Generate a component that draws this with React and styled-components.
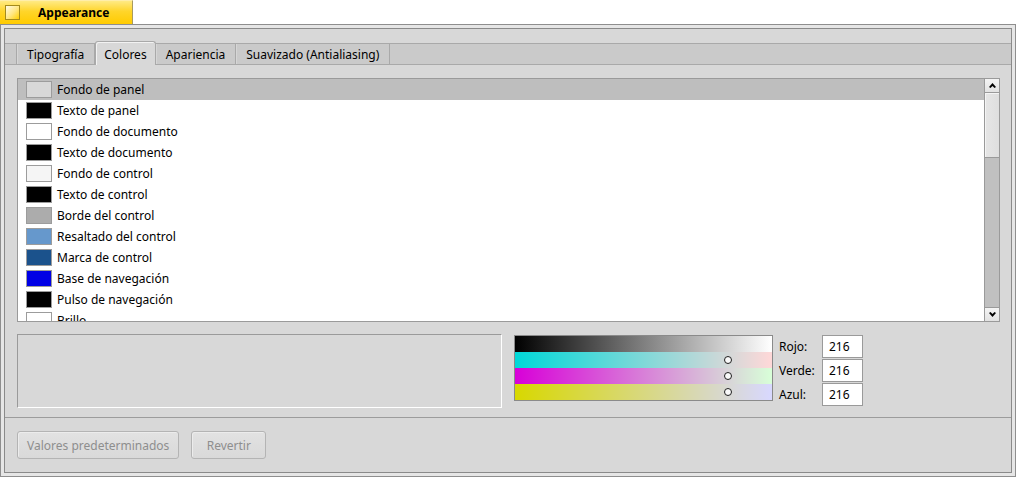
import React from "react";
import styled, { createGlobalStyle } from "styled-components";

const GlobalStyle = createGlobalStyle`
  html, body {
    margin: 0;
    padding: 0;
    background: #fff;
  }
  body {
    font-family: "Noto Sans", "DejaVu Sans", sans-serif;
    font-size: 12px;
    color: #000;
  }
  * {
    box-sizing: border-box;
  }
`;

const Page = styled.div`
  width: 1016px;
  height: 477px;
  display: flex;
  flex-direction: column;
  overflow: hidden;
`;

const TitleTab = styled.div`
  width: 133px;
  height: 24px;
  flex: none;
  display: flex;
  align-items: center;
  padding-left: 5px;
  background: linear-gradient(180deg, #ffea84 0%, #ffd52a 45%, #ffcb00 100%);
  border-right: 1px solid #a89a60;
  border-top: 1px solid #ffeeaa;

  .close {
    width: 15px;
    height: 15px;
    border: 1px solid #a38a1c;
    background: linear-gradient(135deg, #fffbe6 0%, #ffe680 55%, #ffd000 100%);
    margin-right: 18px;
  }

  .title {
    font-weight: bold;
    font-size: 12px;
    color: #000;
  }
`;

const WindowFrame = styled.div`
  flex: 1;
  display: flex;
  border: 1px solid #8e8e8e;
  background: #e6e6e6;
  padding: 3px;
`;

const WindowBody = styled.div`
  flex: 1;
  display: flex;
  flex-direction: column;
  border: 1px solid #8a8a8a;
  background: #d8d8d8;
`;

const TabView = styled.div`
  flex: 1;
  display: flex;
  flex-direction: column;
  padding-top: 14px;
`;

const TabStrip = styled.div`
  height: 22px;
  display: flex;
  align-items: stretch;
  background: #cacaca;
  border-top: 1px solid #a9a9a9;
  border-bottom: 1px solid #a9a9a9;
`;

const TabLead = styled.div`
  width: 12px;
  border-right: 1px solid #a9a9a9;
`;

const Tab = styled.div`
  display: flex;
  align-items: center;
  padding: 0 10px;
  border-right: 1px solid #a9a9a9;
  box-shadow: inset 1px 0 0 #d6d6d6;
  white-space: nowrap;

  &.active {
    margin-top: -3px;
    margin-bottom: -1px;
    padding: 1px 8px 0 8px;
    border: 1px solid #a9a9a9;
    border-bottom: none;
    border-radius: 3px 3px 0 0;
    background: #d8d8d8;
    box-shadow: inset 1px 1px 0 #f2f2f2;
  }
`;

const TabPanel = styled.div`
  flex: 1;
  display: flex;
  flex-direction: column;
  padding: 13px 11px 0 12px;
  border-bottom: 1px solid #9c9c9c;
`;

const ListBox = styled.div`
  height: 244px;
  display: flex;
  border: 1px solid #9a9a9a;
  background: #fff;
`;

const Rows = styled.div`
  flex: 1;
  overflow: hidden;
`;

const Row = styled.div`
  height: 21px;
  display: flex;
  align-items: center;
  gap: 5px;
  padding-left: 8px;
  background: ${(p) => (p.$selected ? "#bebebe" : "transparent")};
  white-space: nowrap;
`;

const Swatch = styled.span`
  width: 26px;
  height: 17px;
  flex: none;
  border: 1px solid #9c9c9c;
  background: ${(p) => p.$color};
`;

const ScrollBar = styled.div`
  width: 15px;
  display: flex;
  flex-direction: column;
  border-left: 1px solid #9a9a9a;
  background: #c0c0c0;
`;

const ScrollButton = styled.div`
  height: 14px;
  display: flex;
  align-items: center;
  justify-content: center;
  background: linear-gradient(180deg, #f4f4f4, #e2e2e2);
  border-top: ${(p) => (p.$down ? "1px solid #9a9a9a" : "none")};
  border-bottom: ${(p) => (p.$down ? "none" : "1px solid #9a9a9a")};
`;

const Thumb = styled.div`
  height: 65px;
  background: linear-gradient(90deg, #e6e6e6, #dedede);
  border-bottom: 1px solid #9a9a9a;
  box-shadow: inset 1px 1px 0 #f4f4f4;
`;

const Track = styled.div`
  flex: 1;
`;

const BottomRow = styled.div`
  display: flex;
  align-items: flex-start;
  margin-top: 12px;
`;

const Preview = styled.div`
  width: 485px;
  height: 74px;
  background: ${(p) => p.$color};
  border-top: 1px solid #9a9a9a;
  border-left: 1px solid #9a9a9a;
  border-bottom: 1px solid #fff;
  border-right: 1px solid #fff;
  margin-right: 12px;
`;

const ColorControl = styled.div`
  width: 259px;
  margin-top: 1px;
  display: flex;
  flex-direction: column;
  border: 1px solid #8a8a8a;
`;

const Ramp = styled.div`
  position: relative;
  height: 16px;
  background: linear-gradient(90deg, ${(p) => p.$from}, ${(p) => p.$to});
`;

const Marker = styled.span`
  position: absolute;
  top: 4px;
  width: 8px;
  height: 8px;
  border-radius: 50%;
  border: 1px solid #1e1e1e;
  background: #fafafa;
`;

const Fields = styled.div`
  margin: 1px 0 0 6px;
  display: grid;
  grid-template-columns: 43px 41px;
  row-gap: 1px;
  align-items: center;
`;

const FieldLabel = styled.span`
  white-space: nowrap;
`;

const Field = styled.div`
  height: 23px;
  display: flex;
  align-items: center;
  padding-left: 6px;
  background: #fff;
  border: 1px solid #9a9a9a;
`;

const ButtonBar = styled.div`
  height: 54px;
  display: flex;
  align-items: flex-start;
  gap: 12px;
  padding: 13px 12px 0;
`;

const Button = styled.button`
  height: 28px;
  min-width: 75px;
  padding: 0 9px;
  font-family: inherit;
  font-size: 12px;
  color: ${(p) => (p.disabled ? "#8e8e8e" : "#000")};
  background: linear-gradient(180deg, #e2e2e2, #d9d9d9);
  border: 1px solid #b4b4b4;
  border-radius: 3px;
  box-shadow: inset 1px 1px 0 #ececec;
`;

const Arrow = ({ down }) => (
  <svg width="7" height="5" viewBox="0 0 7 5">
    <polygon
      points="0,4 3.5,0 7,4 5.5,5 3.5,3 1.5,5"
      fill="#000"
      transform={down ? "rotate(180 3.5 2.5)" : undefined}
    />
  </svg>
);

const colors = [
  ["Fondo de panel", "#d8d8d8"],
  ["Texto de panel", "#000000"],
  ["Fondo de documento", "#ffffff"],
  ["Texto de documento", "#000000"],
  ["Fondo de control", "#f5f5f5"],
  ["Texto de control", "#000000"],
  ["Borde del control", "#acacac"],
  ["Resaltado del control", "#6698cc"],
  ["Marca de control", "#1b528c"],
  ["Base de navegación", "#0000e5"],
  ["Pulso de navegación", "#000000"],
  ["Brillo", "#ffffff"],
];

const rgb = { r: 216, g: 216, b: 216 };

const App = () => {
  const ramps = [
    { from: "#000", to: "#fff" },
    { from: "rgb(0,216,216)", to: "rgb(255,216,216)", value: rgb.r },
    { from: "rgb(216,0,216)", to: "rgb(216,255,216)", value: rgb.g },
    { from: "rgb(216,216,0)", to: "rgb(216,216,255)", value: rgb.b },
  ];

  return (
    <Page>
      <GlobalStyle />
      <TitleTab>
        <div className="close" />
        <span className="title">Appearance</span>
      </TitleTab>
      <WindowFrame>
        <WindowBody>
          <TabView>
            <TabStrip>
              <TabLead />
              <Tab>Tipografía</Tab>
              <Tab className="active">Colores</Tab>
              <Tab>Apariencia</Tab>
              <Tab>Suavizado (Antialiasing)</Tab>
            </TabStrip>
            <TabPanel>
              <ListBox>
                <Rows>
                  {colors.map(([name, color], i) => (
                    <Row key={name} $selected={i === 0}>
                      <Swatch $color={color} />
                      {name}
                    </Row>
                  ))}
                </Rows>
                <ScrollBar>
                  <ScrollButton>
                    <Arrow />
                  </ScrollButton>
                  <Thumb />
                  <Track />
                  <ScrollButton $down>
                    <Arrow down />
                  </ScrollButton>
                </ScrollBar>
              </ListBox>
              <BottomRow>
                <Preview $color="#d8d8d8" />
                <ColorControl>
                  {ramps.map((r, i) => (
                    <Ramp key={i} $from={r.from} $to={r.to}>
                      {r.value !== undefined && (
                        <Marker style={{ left: (r.value / 255) * 252 - 4 }} />
                      )}
                    </Ramp>
                  ))}
                </ColorControl>
                <Fields>
                  <FieldLabel>Rojo:</FieldLabel>
                  <Field>{rgb.r}</Field>
                  <FieldLabel>Verde:</FieldLabel>
                  <Field>{rgb.g}</Field>
                  <FieldLabel>Azul:</FieldLabel>
                  <Field>{rgb.b}</Field>
                </Fields>
              </BottomRow>
            </TabPanel>
          </TabView>
          <ButtonBar>
            <Button disabled>Valores predeterminados</Button>
            <Button disabled>Revertir</Button>
          </ButtonBar>
        </WindowBody>
      </WindowFrame>
    </Page>
  );
};

export default App;
